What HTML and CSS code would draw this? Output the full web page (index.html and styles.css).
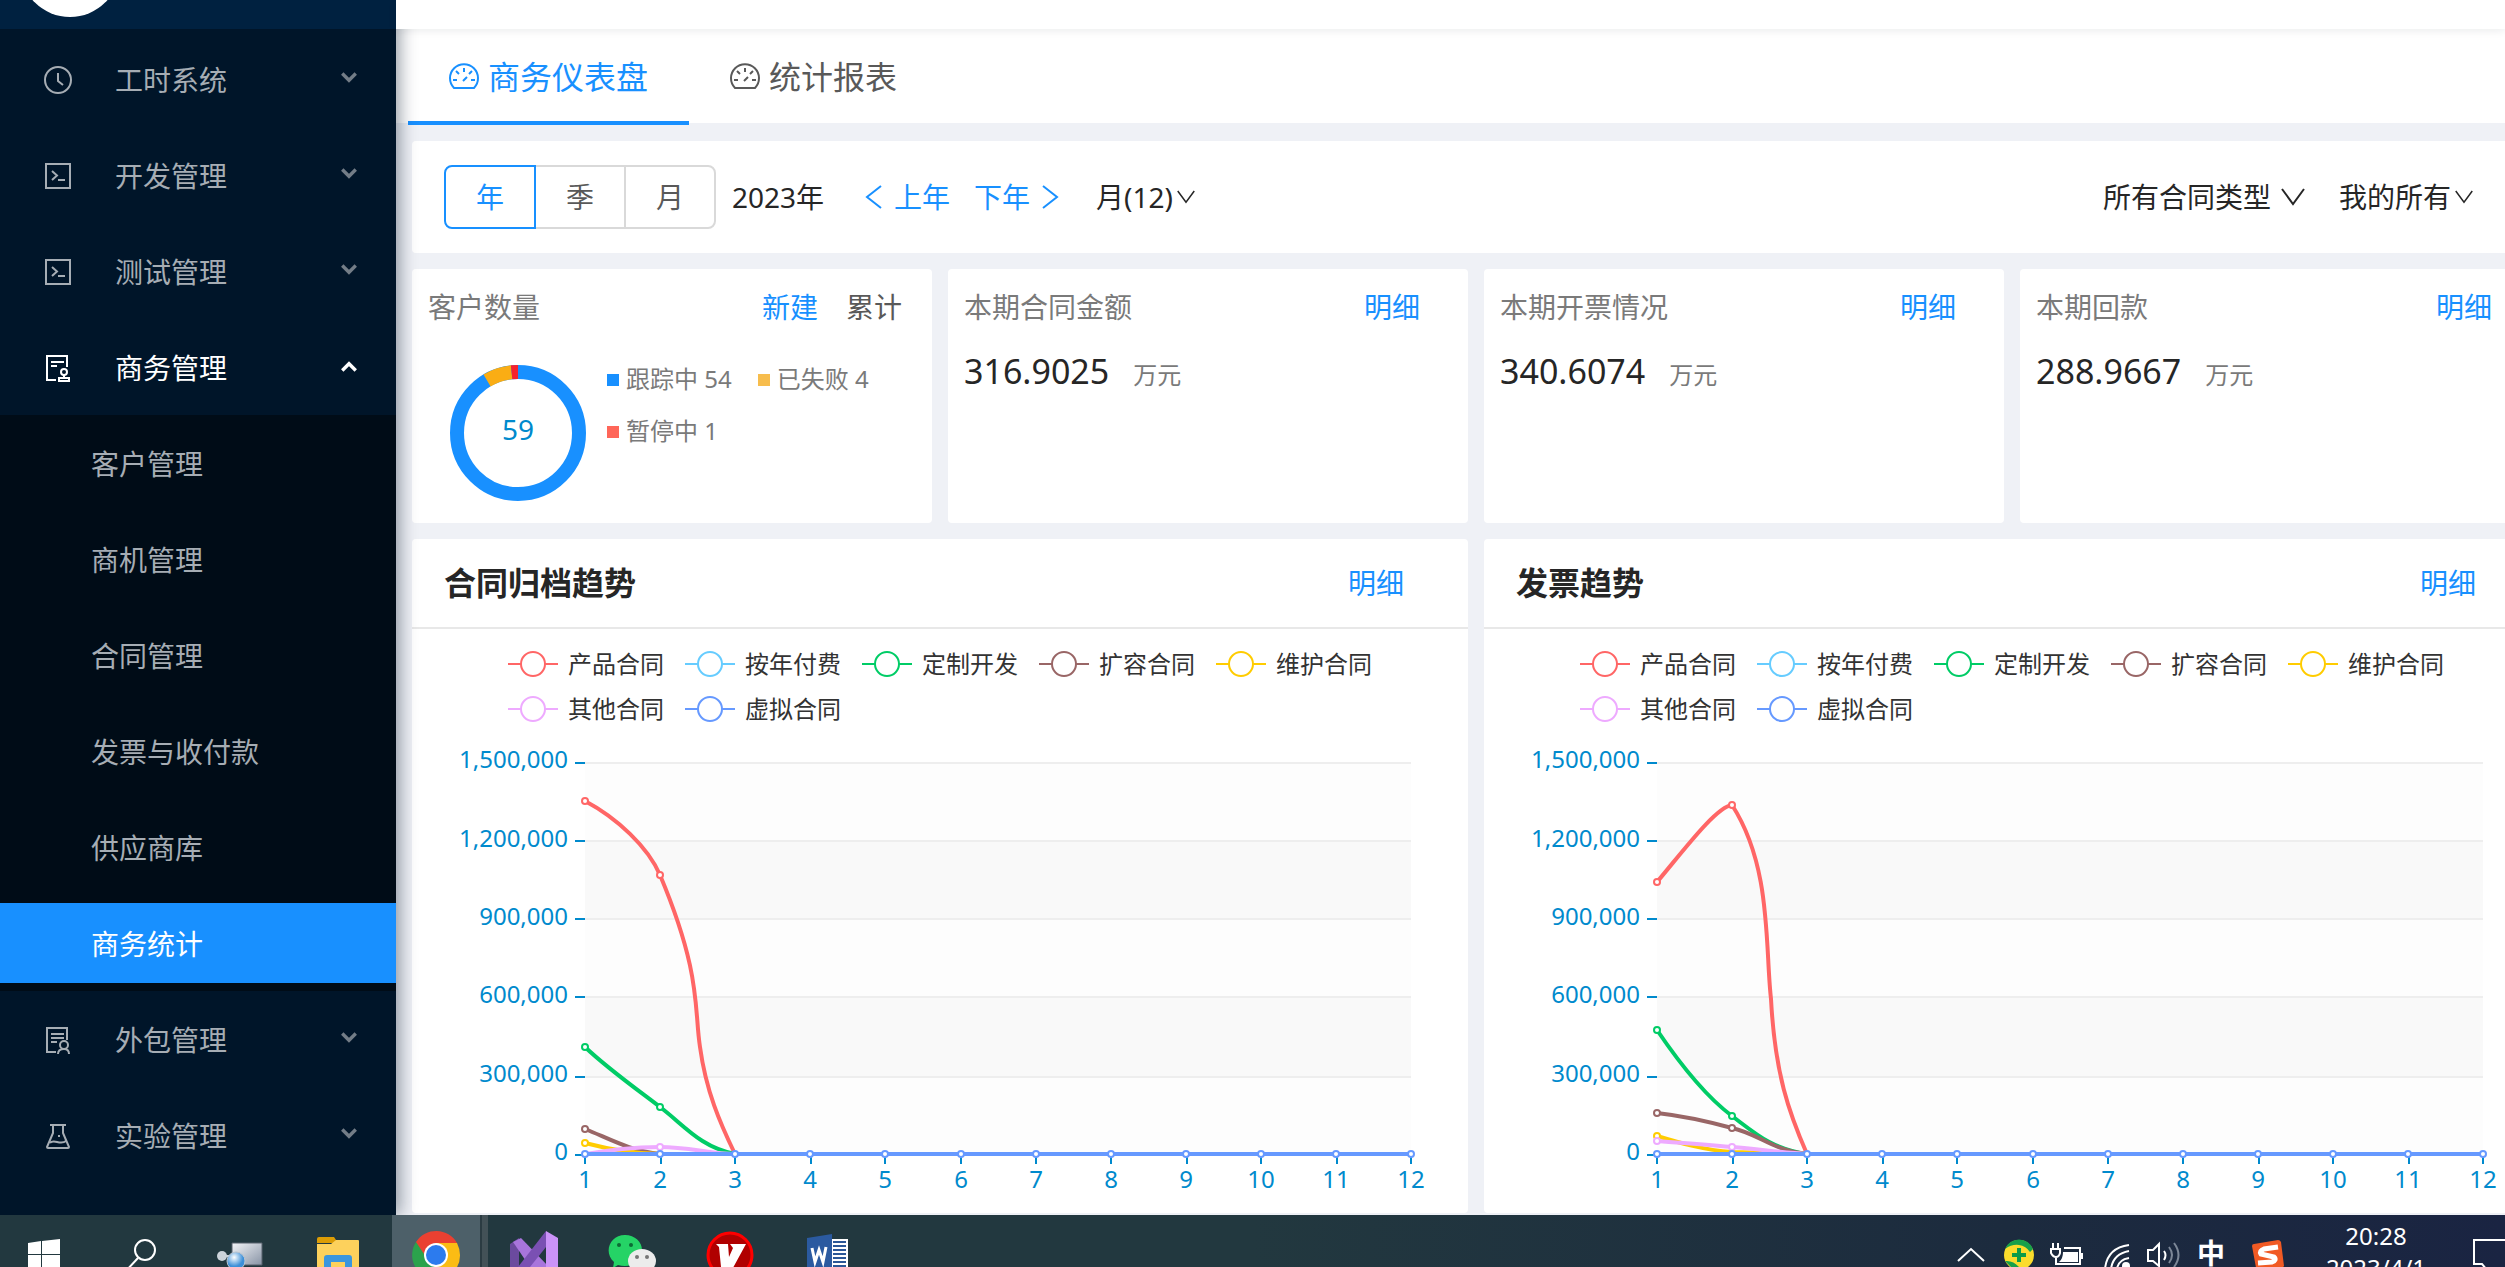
FILE: index.html
```html
<!DOCTYPE html>
<html lang="zh-CN">
<head>
<meta charset="utf-8">
<title>商务仪表盘</title>
<link rel="stylesheet" href="styles.css">
</head>
<body>
<svg class="sprite" aria-hidden="true">
  <symbol id="i-chev" viewBox="0 0 16 16"><path d="M2 4l6 6 6-6" fill="none" stroke="currentColor" stroke-width="3"/></symbol>
  <symbol id="i-down" viewBox="0 0 24 24"><path d="M1 4l11 15L23 4" fill="none" stroke="currentColor" stroke-width="2"/></symbol>
  <symbol id="i-clock" viewBox="0 0 28 28"><g fill="none" stroke="currentColor" stroke-width="2"><circle cx="14" cy="14" r="13"/><path d="M14 7v8l5 4"/></g></symbol>
  <symbol id="i-code" viewBox="0 0 28 28"><g fill="none" stroke="currentColor" stroke-width="2"><path d="M2 2h24v24H2z"/><path d="M8 9l5 4.500l-5 4.500M14 18h7"/></g></symbol>
  <symbol id="i-audit" viewBox="0 0 28 28"><g fill="none" stroke="currentColor" stroke-width="2"><path d="M12 26H3V2h20v11M7 8h13M7 12h6"/><circle cx="20" cy="18" r="3"/><path d="M20 21v3M15 24h10v3H15z"/></g></symbol>
  <symbol id="i-solution" viewBox="0 0 28 28"><g fill="none" stroke="currentColor" stroke-width="2"><path d="M12 26H3V2h20v12M7 8h13M7 12h13M7 16h6"/><circle cx="20" cy="19" r="4"/><path d="M14 28c0-3 2-5 6-5s5 2 5 5"/></g></symbol>
  <symbol id="i-lab" viewBox="0 0 28 28"><g fill="none" stroke="currentColor" stroke-width="2"><path d="M6 3h16M9 3v8L3 25c0 1 0 1 1 1h20c1 0 1 0 1-1l-6-14V3M6 21c4-5 10 3 16-2"/><path d="M14 14h2"/></g></symbol>
  <symbol id="i-dash" viewBox="0 0 32 32"><g fill="none" stroke="currentColor" stroke-width="2"><path d="M6 27A14 14 0 1 1 26 27z"/><path d="M16 7v4M8 10l3 3M24 10l-3 3M5 19h4M23 19h4M15 20l4-4"/></g></symbol>
  <symbol id="i-left" viewBox="0 0 24 24"><path d="M19 1L5 12l14 11" fill="none" stroke="currentColor" stroke-width="2"/></symbol>
  <symbol id="i-mark" viewBox="0 0 50 28"><path d="M0 14h50" stroke="currentColor" stroke-width="2"/><circle cx="25" cy="14" r="12" fill="#fff" stroke="currentColor" stroke-width="2"/></symbol>
</svg>

<div class="app">
  <aside class="side">
    <div class="brand"><span class="logo"></span></div>
    <nav class="menu">
      <a class="item" href="#"><svg class="ico"><use href="#i-clock"/></svg><span>工时系统</span><svg class="arrow"><use href="#i-chev"/></svg></a>
      <a class="item" href="#"><svg class="ico"><use href="#i-code"/></svg><span>开发管理</span><svg class="arrow"><use href="#i-chev"/></svg></a>
      <a class="item" href="#"><svg class="ico"><use href="#i-code"/></svg><span>测试管理</span><svg class="arrow"><use href="#i-chev"/></svg></a>
      <a class="item open" href="#"><svg class="ico"><use href="#i-audit"/></svg><span>商务管理</span><svg class="arrow"><use href="#i-chev"/></svg></a>
      <div class="sub">
        <a class="subitem" href="#">客户管理</a>
        <a class="subitem" href="#">商机管理</a>
        <a class="subitem" href="#">合同管理</a>
        <a class="subitem" href="#">发票与收付款</a>
        <a class="subitem" href="#">供应商库</a>
        <a class="subitem current" href="#">商务统计</a>
      </div>
      <a class="item" href="#"><svg class="ico"><use href="#i-solution"/></svg><span>外包管理</span><svg class="arrow"><use href="#i-chev"/></svg></a>
      <a class="item" href="#"><svg class="ico"><use href="#i-lab"/></svg><span>实验管理</span><svg class="arrow"><use href="#i-chev"/></svg></a>
    </nav>
  </aside>

  <main class="main">
    <header class="topbar"></header>
    <nav class="tabs">
      <a class="tab active" href="#"><svg><use href="#i-dash"/></svg>商务仪表盘</a>
      <a class="tab" href="#"><svg><use href="#i-dash"/></svg>统计报表</a>
    </nav>
    <div class="content">
      <section class="card filter">
        <div class="group">
          <button class="seg on" type="button">年</button>
          <button class="seg" type="button">季</button>
          <button class="seg" type="button">月</button>
        </div>
        <span class="year">2023年</span>
        <button class="step" type="button"><svg><use href="#i-left"/></svg>上年</button>
        <button class="step next" type="button">下年<svg><use href="#i-left"/></svg></button>
        <button class="drop month" type="button">月(12)<svg class="small"><use href="#i-down"/></svg></button>
        <button class="drop type" type="button">所有合同类型<svg><use href="#i-down"/></svg></button>
        <button class="drop" type="button">我的所有<svg class="small"><use href="#i-down"/></svg></button>
      </section>

      <section class="stats">
        <article class="card stat">
          <div class="head wide"><h2>客户数量</h2><span class="links"><a href="#">新建</a><a class="plain" href="#">累计</a></span></div>
          <div class="donut-row">
            <svg class="donut" viewBox="0 0 136 136">
              <g fill="none" stroke-width="14" transform="rotate(-90 68 68)">
                <circle cx="68" cy="68" r="61" stroke="#1890ff"/>
                <circle cx="68" cy="68" r="61" stroke="#faad14" pathLength="59" stroke-dasharray="4 55" stroke-dashoffset="-54"/>
                <circle cx="68" cy="68" r="61" stroke="#f5222d" pathLength="59" stroke-dasharray="1 58" stroke-dashoffset="-58"/>
              </g>
              <text x="68" y="75" text-anchor="middle">59</text>
            </svg>
            <ul class="keys">
              <li class="k-blue">跟踪中 54</li>
              <li class="k-gold">已失败 4</li>
              <li class="k-red">暂停中 1</li>
            </ul>
          </div>
        </article>
        <article class="card stat">
          <div class="head"><h2>本期合同金额</h2><a href="#">明细</a></div>
          <p class="value">316.9025<small>万元</small></p>
        </article>
        <article class="card stat">
          <div class="head"><h2>本期开票情况</h2><a href="#">明细</a></div>
          <p class="value">340.6074<small>万元</small></p>
        </article>
        <article class="card stat">
          <div class="head"><h2>本期回款</h2><a href="#">明细</a></div>
          <p class="value">288.9667<small>万元</small></p>
        </article>
      </section>

      <section class="charts">
        <article class="card chart">
          <div class="chart-head"><h2>合同归档趋势</h2><a href="#">明细</a></div>
          <ul class="legend">
            <li><svg class="c-red"><use href="#i-mark"/></svg>产品合同</li>
            <li><svg class="c-sky"><use href="#i-mark"/></svg>按年付费</li>
            <li><svg class="c-green"><use href="#i-mark"/></svg>定制开发</li>
            <li><svg class="c-brown"><use href="#i-mark"/></svg>扩容合同</li>
            <li><svg class="c-gold"><use href="#i-mark"/></svg>维护合同</li>
            <li><svg class="c-pink"><use href="#i-mark"/></svg>其他合同</li>
            <li><svg class="c-blue"><use href="#i-mark"/></svg>虚拟合同</li>
          </ul>
          <svg class="plot" viewBox="0 0 1056 484">
            <g id="grid">
              <path d="M173 34h826v78H173zM173 191h826v78H173zM173 348h826v78H173z" fill="#fdfdfd"/>
              <path d="M173 112h826v79H173zM173 269h826v79H173z" fill="#f9f9f9"/>
              <path d="M173 34h826M173 112h826M173 190h826M173 268h826M173 348h826" stroke="#eee" stroke-width="2"/>
              <path d="M163 34h10M163 112h10M163 190h10M163 268h10M163 348h10M163 426h10M173 426v9M249 426v9M323 426v9M399 426v9M473 426v9M549 426v9M624 426v9M699 426v9M775 426v9M849 426v9M925 426v9M999 426v9" stroke="#008acd" stroke-width="2"/>
            </g>
            <g class="ylab"><text x="156" y="39">1,500,000</text><text x="156" y="118">1,200,000</text><text x="156" y="196">900,000</text><text x="156" y="274">600,000</text><text x="156" y="353">300,000</text><text x="156" y="431">0</text></g>
            <g class="xlab"><text x="173" y="459">1</text><text x="248" y="459">2</text><text x="323" y="459">3</text><text x="398" y="459">4</text><text x="473" y="459">5</text><text x="549" y="459">6</text><text x="624" y="459">7</text><text x="699" y="459">8</text><text x="774" y="459">9</text><text x="849" y="459">10</text><text x="924" y="459">11</text><text x="999" y="459">12</text></g>
            <g class="lines">
              <path class="c-red" d="M173 72C205 89 236 118 248 146C290 246 282 280 288 318C294 362 308 394 323 425"/>
              <path class="c-green" d="M173 318C196 340 230 364 248 378C272 396 288 418 323 425"/>
              <path class="c-brown" d="M173 400C196 409 218 422 248 425"/>
              <path class="c-gold" d="M173 414C196 420 220 425 248 425"/>
              <path class="c-pink" d="M173 425C200 421 220 418 248 418S300 425 323 425"/>
              <path class="c-blue" d="M173 425H999"/>
            </g>
            <g class="dots">
              <g class="c-red"><circle cx="173" cy="72" r="3"/><circle cx="248" cy="146" r="3"/></g>
              <g class="c-green"><circle cx="173" cy="318" r="3"/><circle cx="248" cy="378" r="3"/></g>
              <g class="c-brown"><circle cx="173" cy="400" r="3"/></g>
              <g class="c-gold"><circle cx="173" cy="414" r="3"/></g>
              <g class="c-pink"><circle cx="248" cy="418" r="3"/></g>
              <g class="c-blue" id="base"><circle cx="173" cy="425" r="3"/><circle cx="248" cy="425" r="3"/><circle cx="323" cy="425" r="3"/><circle cx="398" cy="425" r="3"/><circle cx="473" cy="425" r="3"/><circle cx="549" cy="425" r="3"/><circle cx="624" cy="425" r="3"/><circle cx="699" cy="425" r="3"/><circle cx="774" cy="425" r="3"/><circle cx="849" cy="425" r="3"/><circle cx="924" cy="425" r="3"/><circle cx="999" cy="425" r="3"/></g>
            </g>
          </svg>
        </article>
        <article class="card chart">
          <div class="chart-head"><h2>发票趋势</h2><a href="#">明细</a></div>
          <ul class="legend">
            <li><svg class="c-red"><use href="#i-mark"/></svg>产品合同</li>
            <li><svg class="c-sky"><use href="#i-mark"/></svg>按年付费</li>
            <li><svg class="c-green"><use href="#i-mark"/></svg>定制开发</li>
            <li><svg class="c-brown"><use href="#i-mark"/></svg>扩容合同</li>
            <li><svg class="c-gold"><use href="#i-mark"/></svg>维护合同</li>
            <li><svg class="c-pink"><use href="#i-mark"/></svg>其他合同</li>
            <li><svg class="c-blue"><use href="#i-mark"/></svg>虚拟合同</li>
          </ul>
          <svg class="plot" viewBox="0 0 1056 484">
            <use href="#grid"/>
            <g class="ylab"><text x="156" y="39">1,500,000</text><text x="156" y="118">1,200,000</text><text x="156" y="196">900,000</text><text x="156" y="274">600,000</text><text x="156" y="353">300,000</text><text x="156" y="431">0</text></g>
            <g class="xlab"><text x="173" y="459">1</text><text x="248" y="459">2</text><text x="323" y="459">3</text><text x="398" y="459">4</text><text x="473" y="459">5</text><text x="549" y="459">6</text><text x="624" y="459">7</text><text x="699" y="459">8</text><text x="774" y="459">9</text><text x="849" y="459">10</text><text x="924" y="459">11</text><text x="999" y="459">12</text></g>
            <g class="lines">
              <path class="c-red" d="M173 153C200 121 232 78 248 76C288 138 281 218 287 270C291 345 305 384 323 425"/>
              <path class="c-green" d="M173 301C196 335 224 369 248 387C272 405 288 420 323 425"/>
              <path class="c-brown" d="M173 384C200 387 226 393 248 399C275 405 290 422 323 425"/>
              <path class="c-gold" d="M173 407C196 414 220 421 248 423L323 425"/>
              <path class="c-pink" d="M173 412C200 414 226 416 248 418C275 420 300 424 323 425"/>
              <path class="c-blue" d="M173 425H999"/>
            </g>
            <g class="dots">
              <g class="c-red"><circle cx="173" cy="153" r="3"/><circle cx="248" cy="76" r="3"/></g>
              <g class="c-green"><circle cx="173" cy="301" r="3"/><circle cx="248" cy="387" r="3"/></g>
              <g class="c-brown"><circle cx="173" cy="384" r="3"/><circle cx="248" cy="399" r="3"/></g>
              <g class="c-gold"><circle cx="173" cy="407" r="3"/></g>
              <g class="c-pink"><circle cx="173" cy="412" r="3"/><circle cx="248" cy="418" r="3"/></g>
              <use href="#base"/>
            </g>
          </svg>
        </article>
      </section>
    </div>
  </main>
</div>

<footer class="taskbar">
  <div class="apps">
    <button class="app-btn" type="button" aria-label="开始"><svg viewBox="0 0 48 52"><path fill="#fff" d="M8 28l13-2v13H8zM22 26l18-2v15H22zM8 40h13v12H8zM22 40h18v12H22z"/></svg></button>
    <button class="app-btn" type="button" aria-label="搜索"><svg viewBox="0 0 48 52"><circle cx="27" cy="35" r="10" fill="none" stroke="#fff" stroke-width="2"/><path d="M20 43L7 57" stroke="#fff" stroke-width="2"/></svg></button>
    <button class="app-btn" type="button" aria-label="远程"><svg viewBox="0 0 48 52"><defs><linearGradient id="mon" x2="1" y2="1"><stop stop-color="#f4f5f8"/><stop offset="1" stop-color="#8793a5"/></linearGradient><radialGradient id="orb" cx=".4" cy=".3"><stop stop-color="#fff"/><stop offset="1" stop-color="#3c8fd8"/></radialGradient></defs><path d="M16 28h30v22H16z" fill="url(#mon)" stroke="#56616c"/><circle cx="6" cy="41" r="5" fill="#ccd3da"/><path d="M8 41h10" stroke="#ccd3da" stroke-width="2"/><circle cx="20" cy="46" r="9" fill="url(#orb)" stroke="#b9c4d0"/></svg></button>
    <button class="app-btn" type="button" aria-label="文件"><svg viewBox="0 0 48 52"><path d="M3 24q0-2 2-2h15l4 6H3z" fill="#dc9c05"/><path d="M3 29h14l5-4h22q1 0 1 1v26H3z" fill="#fdd15c"/><path d="M10 52V43q0-3 3-3h22q3 0 3 3v9h-7v-5H17v5z" fill="#3b96dd"/></svg></button>
    <button class="app-btn on" type="button" aria-label="浏览器"><svg viewBox="0 0 48 52"><path d="M24 40L4 27A24 24 0 0 0 22 64z" fill="#2ba24c"/><path d="M24 40h21v24H20z" fill="#fbbc14"/><path d="M24 28h21q3 6 3 12a24 24 0 0 1-9 19l-14 5z" fill="#fbbc14"/><path d="M4 27A24 24 0 0 1 45 28H24q-9 2-12 11z" fill="#ea4031"/><circle cx="24" cy="40" r="12" fill="#fff"/><circle cx="24" cy="40" r="10" fill="#2c7bee"/></svg></button>
    <button class="app-btn" type="button" aria-label="开发工具"><svg viewBox="0 0 48 52"><path d="M0 29l9-6v29H0z" fill="#6b4a9e"/><path d="M3 27l8-4 28 29H20z" fill="#a875dc"/><path d="M36 16l12 7v29H36z" fill="#cb93f8"/><path d="M36 16v16L20 52H8z" fill="#7a50b3"/></svg></button>
    <button class="app-btn" type="button" aria-label="聊天"><svg viewBox="0 0 48 52"><path d="M17 20c10 0 17 7 17 15s-7 16-17 16q-4 0-7-1l-5 3 1-6C-5 37 2 20 17 20z" fill="#25d366"/><circle cx="11" cy="30" r="2" fill="#0c6b35"/><circle cx="23" cy="30" r="2" fill="#0c6b35"/><ellipse cx="34" cy="46" rx="14" ry="12" fill="#ececec"/><circle cx="29" cy="42" r="2" fill="#777"/><circle cx="39" cy="42" r="2" fill="#777"/></svg></button>
    <button class="app-btn" type="button" aria-label="V"><svg viewBox="0 0 48 52"><circle cx="24" cy="40" r="22" fill="#b00000" stroke="#f00" stroke-width="3"/><path d="M10 29h12l1 13 4-9-3-4h16L22 62h-6L13 32z" fill="#fff"/></svg></button>
    <button class="app-btn" type="button" aria-label="文档"><svg viewBox="0 0 48 52"><path d="M26 24h18v28H26z" fill="#fff"/><path d="M29 27h13M29 31h13M29 35h13M29 39h13M29 43h13M29 47h13M29 51h13" stroke="#2b5797" stroke-width="2"/><path d="M3 23l25-4v33H3z" fill="#2b5aa0"/><path d="M8 33l3 14 4-12 4 12 3-15" fill="none" stroke="#fff" stroke-width="3"/></svg></button>
  </div>
  <div class="tray">
    <svg viewBox="0 0 48 52"><path d="M11 46l13-12 13 12" fill="none" stroke="#fff" stroke-width="2"/></svg>
    <svg viewBox="0 0 48 52"><circle cx="24" cy="40" r="15" fill="#fbdc2c"/><path d="M10 34A15 15 0 0 1 38 34l-3 3q-4-6-11-7t-14 4zM10 46q8-1 14 6l-6 2z" fill="#18a04a"/><path d="M24 33v14M17 40h14" stroke="#0b9b49" stroke-width="4"/></svg>
    <svg viewBox="0 0 48 52"><g fill="none" stroke="#fff" stroke-width="2"><path d="M10 28v5M15 28v5M8 34h9v4q-1 4-4 4t-5-4zM13 42v7h24V33H21"/></g><path d="M20 37h15v10H16q4-3 4-10zM38 38h2v6h-2z" fill="#fff"/></svg>
    <svg viewBox="0 0 48 52"><g fill="none" stroke="#fff" stroke-width="2"><path d="M14 54Q16 33 38 30M20 54Q22 39 38 36M26 54Q27 45 38 43"/></g><circle cx="35" cy="51" r="4" fill="#fff"/></svg>
    <svg viewBox="0 0 48 52"><g fill="none" stroke="#fff" stroke-width="2"><path d="M9 35h5l6-6v22l-6-5H9zM25 36q3 4 0 9"/><path d="M30 32q6 8 0 16M35 28q9 12 0 24" stroke="#7c8797"/></g></svg>
    <span class="ime">中</span>
    <svg class="sogou" viewBox="0 0 64 52"><path d="M17 31q0-2 2-2l24-4q2 0 3 2l3 24-5 6-22 1z" fill="#f15a24"/><path d="M43 32l-14 2q-5 2-3 5l13 3q3 3-2 5l-14 1" fill="none" stroke="#fff" stroke-width="5"/></svg>
    <div class="clock"><time>20:28</time><time>2023/4/1</time></div>
    <svg class="notify" viewBox="0 0 52 52"><path d="M60 25H21v24h8l5 6" fill="none" stroke="#fff" stroke-width="2"/></svg>
  </div>
</footer>
</body>
</html>
```

FILE: styles.css
```css
* { box-sizing: border-box; }
body {
  margin: 0;
  height: 100vh;
  display: flex;
  flex-direction: column;
  overflow: hidden;
  font-family: "Noto Sans", "Noto Sans CJK SC", sans-serif;
  font-size: 28px;
  line-height: 40px;
  color: #262626;
  background: #eff1f6;
}
h2, p, ul { margin: 0; padding: 0; font-weight: 400; font-size: inherit; }
ul { list-style: none; }
a { color: #1890ff; text-decoration: none; }
button { font: inherit; color: inherit; background: none; border: 0; padding: 0; }
.sprite { display: none; }

.app { flex: 1; min-height: 0; display: flex; overflow: hidden; }

/* sidebar */
.side {
  flex: 0 0 396px;
  background: #001529;
  box-shadow: 4px 0 16px rgba(0, 21, 41, .4);
  position: relative;
  z-index: 1;
}
.brand { height: 29px; background: #002140; overflow: hidden; display: flex; align-items: flex-end; padding: 0 0 12px 20px; }
.logo { flex: none; width: 100px; height: 100px; border-radius: 50%; background: #fff; }
.menu { padding-top: 2px; }
.item { display: flex; align-items: center; height: 96px; padding: 2px 38px 0 44px; color: #a6adb4; }
.item span { flex: 1; }
.ico { width: 28px; height: 28px; margin-right: 43px; }
.arrow { width: 18px; height: 18px; margin-bottom: 4px; color: #737d87; }
.item.open, .open .arrow { color: #fff; }
.open .arrow { transform: rotate(180deg); }
.sub { background: #000c17; display: flow-root; }
.subitem { display: flex; align-items: center; height: 80px; margin: 8px 0 16px; padding: 2px 0 0 91px; color: #a6adb4; }
.subitem:last-child { margin-bottom: 8px; }
.subitem.current { background: #1890ff; color: #fff; }

/* main column */
.main { flex: 1; min-width: 0; display: flex; flex-direction: column; }
.topbar { flex: 0 0 29px; background: #fff; box-shadow: 0 2px 8px rgba(0, 21, 41, .08); position: relative; z-index: 2; }
.tabs { flex: 0 0 94px; min-height: 0; background: #fff; padding-left: 12px; display: flex; }
.tab { height: 96px; display: flex; align-items: center; gap: 8px; padding: 4px 41px 0 40px; font-size: 32px; color: #595959; border-bottom: 4px solid transparent; }
.tab svg { width: 32px; height: 32px; }
.tab.active { color: #1890ff; border-color: #1890ff; }
.content { width: calc(100% - 32px + 51px); margin: 18px 0 0 16px; display: flex; flex-direction: column; gap: 16px; }
.card { background: #fff; border-radius: 4px; }

.filter { height: 112px; display: flex; align-items: center; padding: 0 67px 0 32px; }
.group { display: flex; }
.seg { width: 92px; height: 64px; margin-left: -2px; border: 2px solid #d9d9d9; color: #595959; }
.seg:first-child { margin-left: 0; border-radius: 8px 0 0 8px; }
.seg:last-child { border-radius: 0 8px 8px 0; }
.seg.on { border-color: #1890ff; color: #1890ff; position: relative; }
.year { width: 130px; margin-left: 16px; }
.step { display: flex; align-items: center; gap: 8px; color: #1890ff; }
.step svg, .drop svg { width: 24px; height: 24px; }
.next { margin-left: 24px; }
.next svg { transform: scaleX(-1); }
.drop { display: flex; align-items: center; gap: 10px; }
.drop svg.small { width: 18px; height: 18px; margin-left: -6px; }
.month { margin-left: 34px; }
.type { margin: 0 34px 0 auto; }

.stats { display: grid; grid-template-columns: repeat(4, 1fr); gap: 16px; }
.stat { height: 254px; padding: 18px 16px; }
.head { display: flex; justify-content: space-between; padding-right: 32px; color: #7a7a7a; }
.head.wide { padding-right: 14px; }
.links { display: flex; gap: 28px; }
.links .plain { color: #595959; }
.value { margin-top: 22px; font-size: 34px; line-height: 44px; }
.value small { margin-left: 24px; font-size: 24px; color: #7a7a7a; }
.donut-row { display: flex; margin: 38px 0 0 22px; }
.donut { width: 136px; height: 136px; flex: none; }
.donut text { font-size: 28px; fill: #008acd; }
.keys { display: flex; flex-wrap: wrap; align-content: flex-start; column-gap: 26px; row-gap: 12px; margin: -6px 0 0 21px; font-size: 24px; color: #7a7a7a; }
.keys li::before { content: ""; display: inline-block; width: 12px; height: 12px; margin-right: 7px; vertical-align: 2px; }
.k-blue::before { background: #1890ff; }
.k-gold::before { background: #f7bd4d; }
.k-red::before { background: #ff6659; }

.charts { display: grid; grid-template-columns: 1fr 1fr; gap: 16px; }
.chart-head { height: 90px; padding: 0 64px 0 32px; display: flex; justify-content: space-between; align-items: center; border-bottom: 2px solid #e8e8e8; }
.chart-head h2 { font-size: 32px; font-weight: 700; }
.legend { display: flex; flex-wrap: wrap; gap: 5px 21px; margin: 15px 48px 0 96px; font-size: 24px; color: #333; }
.legend li { display: flex; align-items: center; gap: 10px; }
.legend svg { width: 50px; height: 28px; }
.plot { display: block; width: 100%; }
.plot text { font-size: 24px; fill: #008acd; }
.ylab { text-anchor: end; }
.xlab { text-anchor: middle; }
.lines { fill: none; stroke: currentColor; stroke-width: 4; }
.lines path, .dots g { stroke: currentColor; }
.dots { fill: #fff; stroke-width: 2; }
.c-red { color: #f66; }
.c-sky { color: #6cf; }
.c-green { color: #0c6; }
.c-brown { color: #966; }
.c-gold { color: #fc0; }
.c-pink { color: #eaf; }
.c-blue { color: #69f; }

/* taskbar */
.taskbar { flex: 0 0 52px; overflow: hidden; display: flex; justify-content: space-between; background: linear-gradient(90deg, #22383f 0, #22383f 50%, #1c2b3e 80%, #1a2442); position: relative; z-index: 3; }
.apps { display: flex; gap: 10px; }
.app-btn { width: 88px; height: 52px; display: flex; justify-content: center; }
.app-btn svg { width: 48px; height: 52px; }
.app-btn.on { background: #4d6069; box-shadow: 2px 0 #2b3b42, 8px 0 #435157; }
.tray { display: flex; color: #fff; }
.tray svg { width: 48px; height: 52px; }
.tray svg.sogou { width: 64px; }
.tray svg.notify { width: 52px; }
.ime { width: 48px; text-align: center; font-weight: 700; padding-top: 18px; }
.clock { width: 154px; height: 52px; padding-top: 5px; font-size: 24px; line-height: 32px; text-align: center; overflow: hidden; }
.clock time { display: block; }
```
